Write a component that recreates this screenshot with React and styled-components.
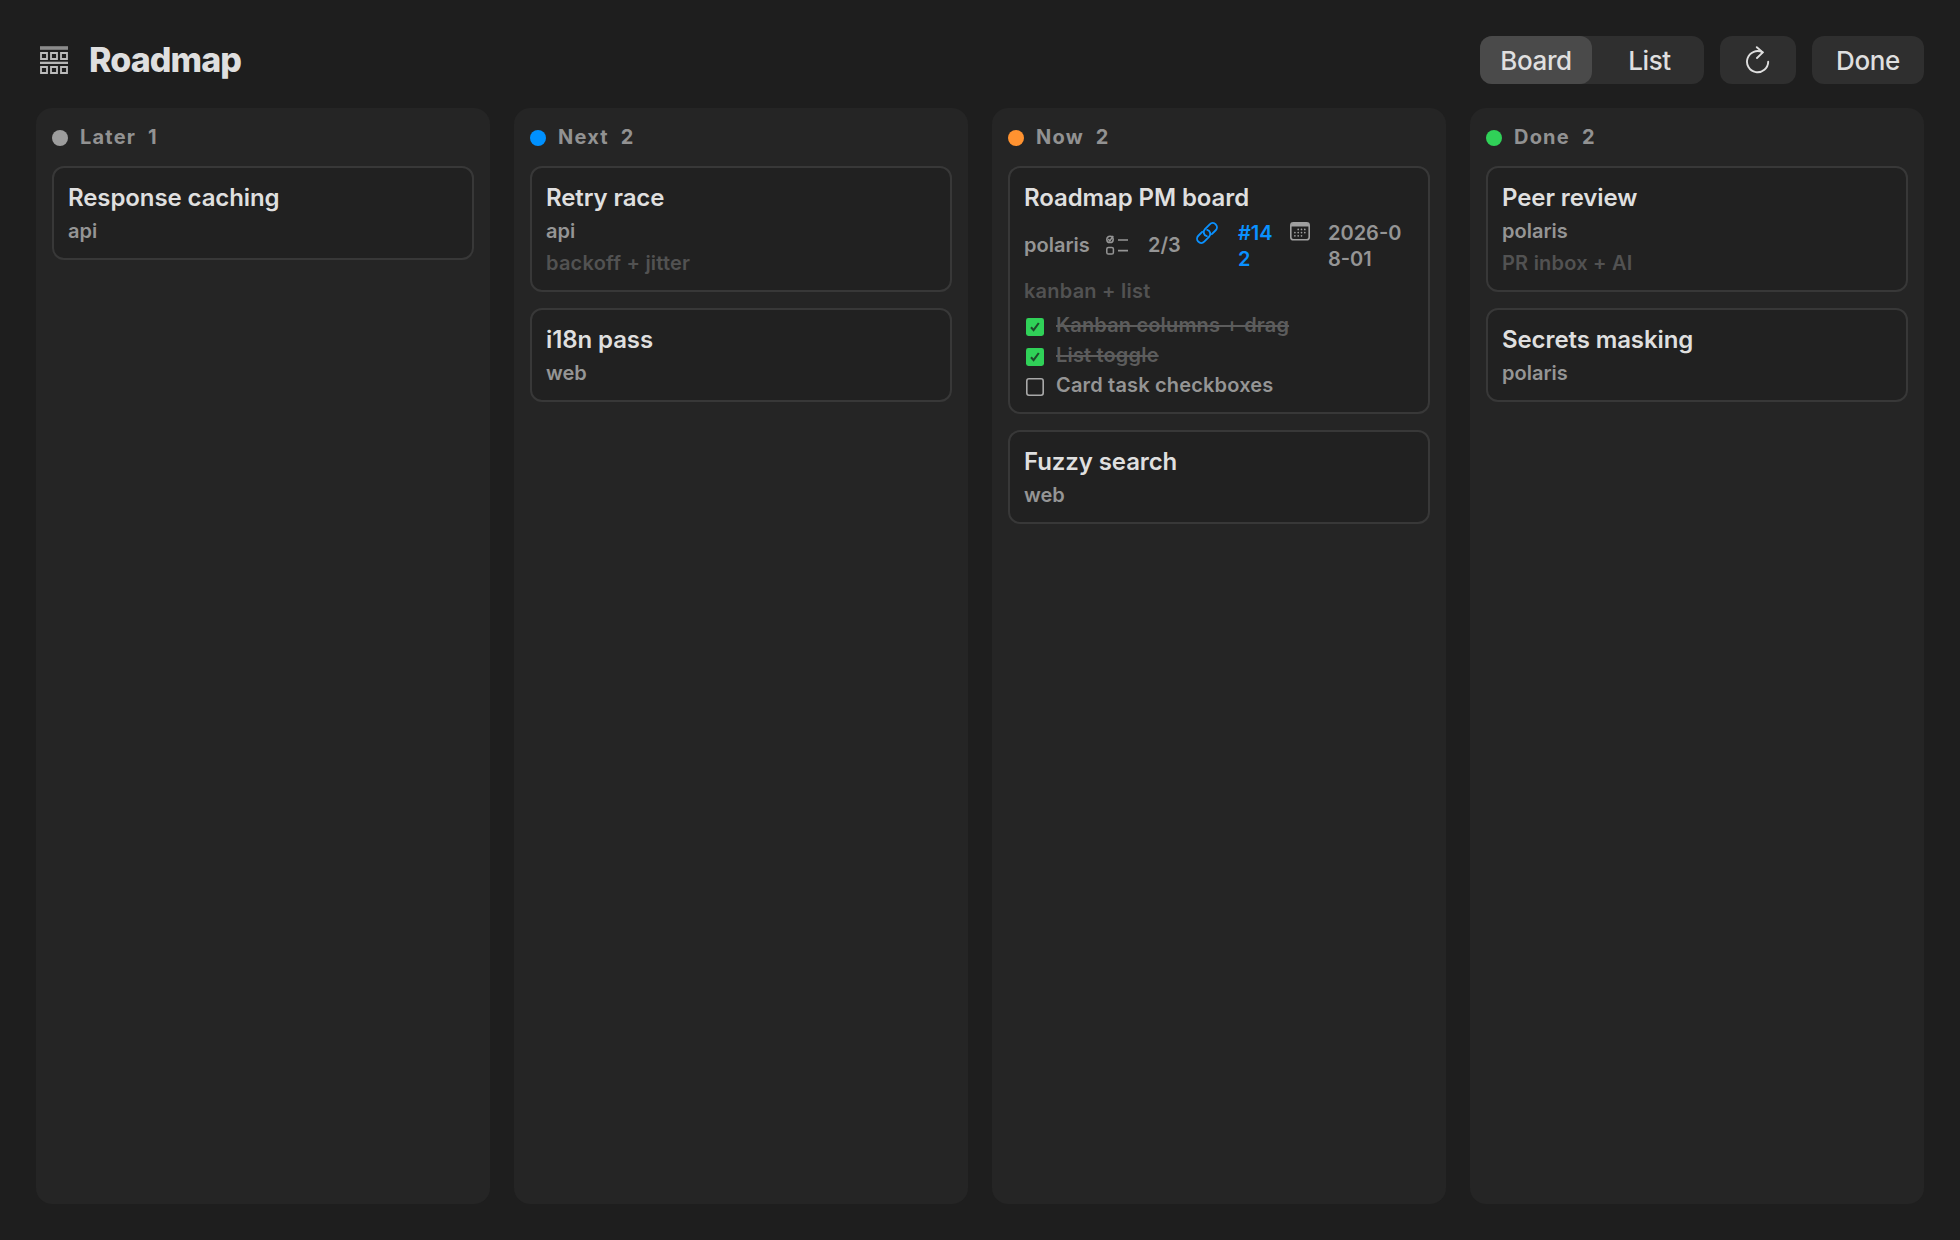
import React, { useState } from 'react'
import styled, { createGlobalStyle } from 'styled-components'

const GlobalStyle = createGlobalStyle`
  * {
    box-sizing: border-box;
  }

  body {
    margin: 0;
    background: #1e1e1e;
  }
`

const Page = styled.div`
  width: 100%;
  height: 100vh;
  padding: 36px;
  display: flex;
  flex-direction: column;
  gap: 24px;

  background: #1e1e1e;
  color: #dfdfdf;
  font-family: Inter, 'Liberation Sans', sans-serif;
`

const Header = styled.header`
  height: 48px;
  display: flex;
  align-items: center;
  gap: 16px;

  .headerIcon {
    margin-left: 4px;
  }
`

const Title = styled.h1`
  flex: 1;
  margin: 0 0 0 5px;
  font-weight: 800;
  font-size: 34px;
  line-height: 48px;
  letter-spacing: -0.9px;
`

const Segmented = styled.div`
  display: flex;
  background: #2f2f2f;
  border-radius: 12px;
`

const Button = styled.button`
  width: ${(props) => props.$width || '112px'};
  height: 48px;
  padding: 0;
  display: flex;
  align-items: center;
  justify-content: center;

  background: ${(props) => props.$bg || '#2f2f2f'};
  border: none;
  border-radius: 12px;

  font-family: inherit;
  font-weight: 500;
  font-size: 26px;
  letter-spacing: -0.4px;
  color: #dfdfdf;
`

const SegmentButton = styled(Button)`
  &:last-child {
    padding-left: 3px;
  }
`

const Board = styled.main`
  flex: 1;
  display: grid;
  grid-template-columns: repeat(4, 1fr);
  gap: 24px;
`

const Column = styled.section`
  padding: 16px;
  display: flex;
  flex-direction: column;
  gap: 16px;

  background: #252525;
  border-radius: 16px;
`

const ColumnHeader = styled.div`
  height: 26px;
  display: flex;
  align-items: center;

  font-weight: 700;
  font-size: 20px;
  line-height: 26px;
  letter-spacing: 1.2px;
  color: #929292;

  .count {
    margin-left: 12px;
  }
`

const Dot = styled.span`
  width: 16px;
  height: 16px;
  margin: 2px 12px 0 0;
  border-radius: 50%;
  background: ${(props) => props.$color};
`

const CardBox = styled.article`
  padding: 15px 14px 14px;
  display: flex;
  flex-direction: column;

  background: #212121;
  border: 2px solid #383838;
  border-radius: 12px;
`

const CardTitle = styled.h2`
  margin: 0 0 5px;
  font-weight: 600;
  font-size: 24px;
  line-height: 30px;
  letter-spacing: -0.1px;
`

const CardBody = styled.div`
  display: flex;
  flex-direction: column;
  gap: 6px;

  font-weight: 600;
  font-size: 20px;
  line-height: 26px;
  letter-spacing: 0;
  color: #959595;
`

const MetaRow = styled.div`
  display: flex;
  align-items: center;
  padding-top: ${(props) => (props.$detailed ? '2px' : '0')};
`

const MetaItem = styled.div`
  width: ${(props) => props.$width};
  margin-left: ${(props) => props.$left};
  margin-bottom: ${(props) => props.$bottom};
  display: flex;
  align-items: flex-start;
  gap: ${(props) => props.$gap || '20px'};
  color: ${(props) => props.$color || 'inherit'};
  word-break: break-all;

  svg {
    flex-shrink: 0;
    margin-top: ${(props) => props.$iconTop || '0'};
  }
`

const Note = styled.div`
  letter-spacing: 0.22px;
  color: #525252;
`

const TaskList = styled.div`
  padding-top: 2px;
  display: flex;
  flex-direction: column;
  gap: 4px;
`

const Task = styled.div`
  display: flex;
  align-items: center;
  gap: 12px;
  padding-left: 2px;
  letter-spacing: 0.17px;
  color: ${(props) => (props.$done ? '#5c5c5c' : '#959595')};

  svg {
    margin-top: 3px;
  }

  .taskLabel {
    text-decoration: ${(props) => (props.$done ? 'line-through' : 'none')};
    text-decoration-thickness: 2px;
  }
`

const BoardIcon = () => (
  <svg className="headerIcon" width="28" height="28" viewBox="0 0 28 28" fill="none">
    <path d="M0 0.2h28v3.6H0z" fill="#8c8c8c" />
    <path d="M0 15.7h28v2.3H0z" fill="#b4b4b4" />
    <g stroke="#bcbcbc" strokeWidth="1.8">
      <path d="M1 7h6v6H1zM11 7h6v6h-6zM21 7h6v6h-6z" />
      <path d="M1 21h6v6H1zM11 21h6v6h-6zM21 21h6v6h-6z" />
    </g>
  </svg>
)

const RefreshIcon = () => (
  <svg width="24" height="28" viewBox="0 0 24 28" fill="none" stroke="#dfdfdf" strokeWidth="1.9" strokeLinecap="round" strokeLinejoin="round">
    <path d="M16.6 6.3A10.6 10.6 0 1 0 22.2 15.8" />
    <path d="M10.8 1.2l6 5.2-5.8 5.6" />
  </svg>
)

const ChecklistIcon = () => (
  <svg width="22" height="20" viewBox="0 0 22 20" fill="none" stroke="#959595" strokeWidth="1.5">
    <circle cx="4" cy="4.4" r="3.2" />
    <path d="M2.3 4.1l1.5 1.8L7.2.8" />
    <rect x="0.8" y="12.4" width="6.6" height="6.6" rx="1.6" />
    <path d="M12 5h10M12 15.6h10" strokeWidth="1.7" />
  </svg>
)

// two interlocked rings, each one open where the other passes over it
const LinkIcon = () => (
  <svg width="22" height="22" viewBox="0 0 22 22" fill="none" stroke="#0a91ff" strokeWidth="1.9" strokeLinecap="round">
    <g transform="translate(11 11) rotate(-45)">
      <path d="M2.6 4.2H8.1a4.2 4.2 0 0 0 0-8.4H1.3a4.2 4.2 0 0 0-3.64 6.3" />
      <path d="M-2.6-4.2H-8.1a4.2 4.2 0 0 0 0 8.4H-1.3a4.2 4.2 0 0 0 3.64-6.3" />
    </g>
  </svg>
)

const CalendarIcon = () => (
  <svg width="20" height="19" viewBox="0 0 20 19" fill="none">
    <rect x="0.8" y="0.8" width="18.4" height="17" rx="2.6" stroke="#a0a0a0" strokeWidth="1.6" />
    <path d="M1 4.6V3a2 2 0 0 1 2-2h14a2 2 0 0 1 2 2v1.6z" fill="#a0a0a0" />
    <path
      d="M8.2 7.4h.01M11.5 7.4h.01M14.8 7.4h.01M4.9 10.6h.01M8.2 10.6h.01M11.5 10.6h.01M14.8 10.6h.01M4.9 13.8h.01M8.2 13.8h.01M11.5 13.8h.01"
      stroke="#a0a0a0"
      strokeWidth="1.7"
      strokeLinecap="round"
    />
  </svg>
)

const CheckBox = ({ checked }) => (
  <svg width="18" height="18" viewBox="0 0 18 18" fill="none">
    {checked ? (
      <>
        <rect width="18" height="18" rx="2.4" fill="#30d158" />
        <path d="M5 9.2l2.6 2.9L12.8 5" stroke="#1d4a2b" strokeWidth="2.1" />
      </>
    ) : (
      <rect x="0.8" y="0.8" width="16.4" height="16.4" rx="2.2" stroke="#a9a9a9" strokeWidth="1.6" />
    )}
  </svg>
)

const columns = [
  {
    name: 'Later',
    color: '#9d9d9d',
    cards: [{ title: 'Response caching', project: 'api' }],
  },
  {
    name: 'Next',
    color: '#0091ff',
    cards: [
      { title: 'Retry race', project: 'api', note: 'backoff + jitter' },
      { title: 'i18n pass', project: 'web' },
    ],
  },
  {
    name: 'Now',
    color: '#ff9230',
    cards: [
      {
        title: 'Roadmap PM board',
        project: 'polaris',
        issue: '#142',
        due: '2026-08-01',
        note: 'kanban + list',
        tasks: [
          { text: 'Kanban columns + drag', done: true },
          { text: 'List toggle', done: true },
          { text: 'Card task checkboxes', done: false },
        ],
      },
      { title: 'Fuzzy search', project: 'web' },
    ],
  },
  {
    name: 'Done',
    color: '#30d158',
    cards: [
      { title: 'Peer review', project: 'polaris', note: 'PR inbox + AI' },
      { title: 'Secrets masking', project: 'polaris' },
    ],
  },
]

const Card = ({ title, project, issue, due, note, tasks }) => (
  <CardBox>
    <CardTitle>{title}</CardTitle>
    <CardBody>
      <MetaRow $detailed={!!tasks}>
        <MetaItem $width={tasks ? '68px' : 'auto'} $bottom={tasks && '2px'}>
          {project}
        </MetaItem>
        {tasks && (
          <MetaItem $left="14px" $width="76px" $bottom="2px" $iconTop="3px">
            <ChecklistIcon />
            {tasks.filter((task) => task.done).length}/{tasks.length}
          </MetaItem>
        )}
        {issue && (
          <MetaItem $left="14px" $width="79px" $color="#0a91ff" $iconTop="2px">
            <LinkIcon />
            {issue}
          </MetaItem>
        )}
        {due && (
          <MetaItem $left="15px" $width="116px" $gap="18px" $iconTop="2px">
            <CalendarIcon />
            {due}
          </MetaItem>
        )}
      </MetaRow>
      {note && <Note>{note}</Note>}
      {tasks && (
        <TaskList>
          {tasks.map((task) => (
            <Task key={task.text} $done={task.done}>
              <CheckBox checked={task.done} />
              <span className="taskLabel">{task.text}</span>
            </Task>
          ))}
        </TaskList>
      )}
    </CardBody>
  </CardBox>
)

const App = () => {
  const [view, setView] = useState('Board')

  return (
    <Page>
      <GlobalStyle />
      <Header>
        <BoardIcon />
        <Title>Roadmap</Title>
        <Segmented>
          {['Board', 'List'].map((name) => (
            <SegmentButton
              key={name}
              $bg={view === name ? '#4a4a4a' : 'transparent'}
              onClick={() => setView(name)}
            >
              {name}
            </SegmentButton>
          ))}
        </Segmented>
        <Button $width="76px" aria-label="Refresh">
          <RefreshIcon />
        </Button>
        <Button>Done</Button>
      </Header>
      <Board>
        {columns.map((column) => (
          <Column key={column.name}>
            <ColumnHeader>
              <Dot $color={column.color} />
              <span>{column.name}</span>
              <span className="count">{column.cards.length}</span>
            </ColumnHeader>
            {column.cards.map((card) => (
              <Card key={card.title} {...card} />
            ))}
          </Column>
        ))}
      </Board>
    </Page>
  )
}

export default App
